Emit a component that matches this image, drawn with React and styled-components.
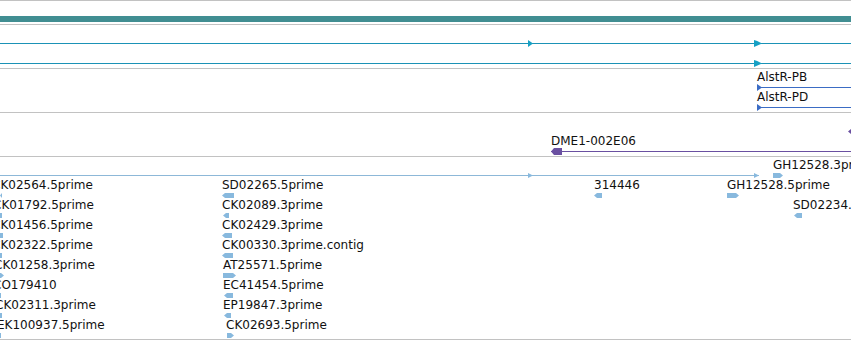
import React from "react";
import styled, { createGlobalStyle } from "styled-components";

const GlobalStyle = createGlobalStyle`
  html, body {
    margin: 0;
    padding: 0;
    background: #ffffff;
  }
  body {
    font-family: "DejaVu Sans", "Liberation Sans", sans-serif;
  }
`;

const Panel = styled.div`
  width: 851px;
  height: 340px;
  overflow: hidden;
  display: flex;
  flex-direction: column;
  background: #ffffff;
`;

const Track = styled.div`
  position: relative;
  height: ${(p) => p.$height}px;
  box-sizing: content-box;
  border-top: ${(p) => (p.$first ? "1px solid #c2c2c2" : "none")};
  border-bottom: 1px solid #c2c2c2;
  overflow: hidden;
  display: flex;
  flex-direction: column;
  flex-shrink: 0;
`;

const ScaleBar = styled.div`
  margin-top: 15px;
  height: 6px;
  background: #418e92;
`;

const Row = styled.div`
  position: relative;
  height: 20px;
  flex-shrink: 0;
`;

const Label = styled.span`
  position: absolute;
  top: 1px;
  font-size: 12px;
  line-height: 14px;
  color: #111111;
  white-space: nowrap;
`;

const Line = styled.div`
  position: absolute;
  top: 18px;
  height: 1px;
  background: ${(p) => p.$color};
`;

const GlyphSvg = styled.svg`
  position: absolute;
  display: block;
  overflow: visible;
`;

const colors = {
  gene: "#1b92b6",
  geneArrow: "#16a0c4",
  mrna: "#3b6cc4",
  clone: "#6a50a1",
  est: "#88b9de",
  estLine: "#8db8d8",
};

function shape(kind, w, h) {
  const m = h / 2;
  const tip = Math.min(3, w);
  if (kind === "left") return `0,${m} ${tip},0 ${w},0 ${w},${h} ${tip},${h}`;
  if (kind === "right") return `0,0 ${w - tip},0 ${w},${m} ${w - tip},${h} 0,${h}`;
  if (kind === "tri") return `0,0 ${w},${m} 0,${h}`;
  if (kind === "flag") return `0,0 ${w * 0.4},${h * 0.15} ${w},${m} 0,${h}`;
  return `0,0 ${w},0 ${w},${h} 0,${h}`;
}

function Glyph({ x, w, h = 5, kind = "box", color }) {
  const top = 18 - Math.floor(h / 2);
  return (
    <GlyphSvg
      width={w}
      height={h}
      viewBox={`0 0 ${w} ${h}`}
      style={{ left: x, top }}
    >
      <polygon points={shape(kind, w, h)} fill={color} />
    </GlyphSvg>
  );
}

function Feature({ f, color }) {
  return (
    <>
      {f.label && <Label style={{ left: f.lx ?? f.x }}>{f.label}</Label>}
      <Glyph x={f.x} w={f.w} h={f.h || 5} kind={f.kind} color={color} />
    </>
  );
}

const estRows = [
  [
    { label: "GH12528.3prime", x: 773, w: 10, kind: "right" },
  ],
  [
    { label: "CK02564.5prime", lx: -8, x: 0, w: 2, kind: "left" },
    { label: "SD02265.5prime", lx: 222, x: 222, w: 12, kind: "left" },
    { label: "314446", lx: 594, x: 594, w: 8, kind: "left" },
    { label: "GH12528.5prime", lx: 727, x: 727, w: 12, kind: "right" },
  ],
  [
    { label: "CK01792.5prime", lx: -7, x: 0, w: 2, kind: "box" },
    { label: "CK02089.3prime", lx: 222, x: 223, w: 6, kind: "left" },
    { label: "SD02234.5prime", lx: 793, x: 794, w: 8, kind: "left" },
  ],
  [
    { label: "CK01456.5prime", lx: -8, x: 0, w: 3, kind: "box" },
    { label: "CK02429.3prime", lx: 222, x: 222, w: 10, kind: "left" },
  ],
  [
    { label: "CK02322.5prime", lx: -8, x: 0, w: 2, kind: "box" },
    { label: "CK00330.3prime.contig", lx: 222, x: 222, w: 11, kind: "left" },
  ],
  [
    { label: "CK01258.3prime", lx: -6, x: 0, w: 4, kind: "right" },
    { label: "AT25571.5prime", lx: 223, x: 223, w: 13, kind: "right" },
  ],
  [
    { label: "CO179410", lx: -7, x: 0, w: 1, kind: "box" },
    { label: "EC41454.5prime", lx: 223, x: 224, w: 9, kind: "left" },
  ],
  [
    { label: "CK02311.3prime", lx: -5, x: 0, w: 2, kind: "box" },
    { label: "EP19847.3prime", lx: 223, x: 224, w: 7, kind: "left" },
  ],
  [
    { label: "EK100937.5prime", lx: -3, x: 0, w: 1, kind: "box" },
    { label: "CK02693.5prime", lx: 226, x: 227, w: 7, kind: "right" },
  ],
];

export default function App() {
  return (
    <>
      <GlobalStyle />
      <Panel>
        <Track $first $height={23}>
          <ScaleBar />
        </Track>

        <Track $height={43}>
          <Row>
            <Line $color={colors.gene} style={{ left: 0, width: 851 }} />
            <Glyph x={528} w={5} h={7} kind="tri" color={colors.geneArrow} />
            <Glyph x={754} w={8} h={7} kind="flag" color={colors.geneArrow} />
          </Row>
          <Row>
            <Line $color={colors.gene} style={{ left: 0, width: 851 }} />
            <Glyph x={754} w={8} h={7} kind="flag" color={colors.geneArrow} />
          </Row>
        </Track>

        <Track $height={43}>
          {["AlstR-PB", "AlstR-PD"].map((name) => (
            <Row key={name}>
              <Label style={{ left: 757 }}>{name}</Label>
              <Line $color={colors.mrna} style={{ left: 757, width: 94 }} />
              <Glyph x={757} w={5} h={7} kind="tri" color={colors.mrna} />
            </Row>
          ))}
        </Track>

        <Track $height={43}>
          <Row>
            <Glyph x={848} w={3} h={5} kind="left" color={colors.clone} />
          </Row>
          <Row>
            <Label style={{ left: 551 }}>DME1-002E06</Label>
            <Line $color={colors.clone} style={{ left: 551, width: 300 }} />
            <Glyph x={551} w={11} h={7} kind="left" color={colors.clone} />
          </Row>
        </Track>

        <Track $height={182}>
          {estRows.map((row, i) => (
            <Row key={i}>
              {i === 0 && (
                <>
                  <Line $color={colors.estLine} style={{ left: 0, width: 759 }} />
                  <Glyph x={528} w={5} h={5} kind="tri" color={colors.est} />
                  <Glyph x={754} w={5} h={5} kind="tri" color={colors.est} />
                </>
              )}
              {row.map((f) => (
                <Feature key={f.label} f={f} color={colors.est} />
              ))}
            </Row>
          ))}
        </Track>
      </Panel>
    </>
  );
}
